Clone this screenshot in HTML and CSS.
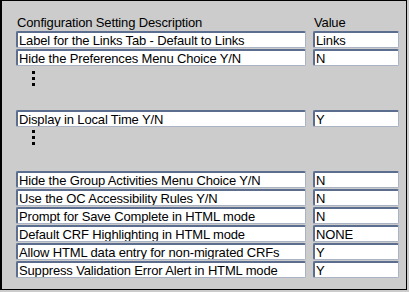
FILE: index.html
```html
<html lang="en">
<head>
    <meta charset="UTF-8">
    <title>Configuration Settings</title>
    <link rel="stylesheet" href="styles.css">
</head>
<body>
    <div class="panel">
        <div class="grid">
            <div class="head">Configuration Setting Description</div>
            <div class="head">Value</div>

            <div class="field">Label for the Links Tab - Default to Links</div>
            <div class="field">Links</div>
            <div class="field">Hide the Preferences Menu Choice Y/N</div>
            <div class="field">N</div>
        </div>

        <div class="more"><i></i><i></i><i></i></div>

        <div class="grid">
            <div class="field">Display in Local Time Y/N</div>
            <div class="field">Y</div>
        </div>

        <div class="more tight"><i></i><i></i><i></i></div>

        <div class="grid">
            <div class="field">Hide the Group Activities Menu Choice Y/N</div>
            <div class="field">N</div>
            <div class="field">Use the OC Accessibility Rules Y/N</div>
            <div class="field">N</div>
            <div class="field">Prompt for Save Complete in HTML mode</div>
            <div class="field">N</div>
            <div class="field">Default CRF Highlighting in HTML mode</div>
            <div class="field">NONE</div>
            <div class="field">Allow HTML data entry for non-migrated CRFs</div>
            <div class="field">Y</div>
            <div class="field">Suppress Validation Error Alert in HTML mode</div>
            <div class="field">Y</div>
        </div>
    </div>
</body>
</html>
```

FILE: styles.css
```css
body {
    margin: 0;
    background-color: #cccccc;
    font-family: 'Liberation Sans', Arial, sans-serif;
    font-size: 13px;
    letter-spacing: -0.15px;
    color: #000000;
}

.panel {
    width: 390px;
    height: 274px;
    padding: 14px 0 0 14px;
    border: 1px solid #000000;
    border-left-width: 2px;
}

.grid {
    display: grid;
    grid-template-columns: 290px 86px;
    column-gap: 7px;
    row-gap: 1px;
}

.head {
    height: 15px;
    line-height: 15px;
    padding-left: 1px;
}

/* text box look */
.field {
    height: 14px;
    line-height: 15px;
    padding-left: 1px;
    background-color: #ffffff;
    border-top: 2px solid #5b6e8f;
    border-left: 2px solid #5b6e8f;
    border-right: 1px solid #a9b3c4;
    border-bottom: 1px solid #a9b3c4;
    border-radius: 2px;
    white-space: nowrap;
    overflow: hidden;
}

.more {
    display: flex;
    flex-direction: column;
    gap: 3px;
    margin: 5px 0 24px 16px;
}

.more.tight {
    margin-top: 3px;
    margin-bottom: 26px;
}

.more i {
    width: 3px;
    height: 3px;
    background-color: #000000;
}
```
